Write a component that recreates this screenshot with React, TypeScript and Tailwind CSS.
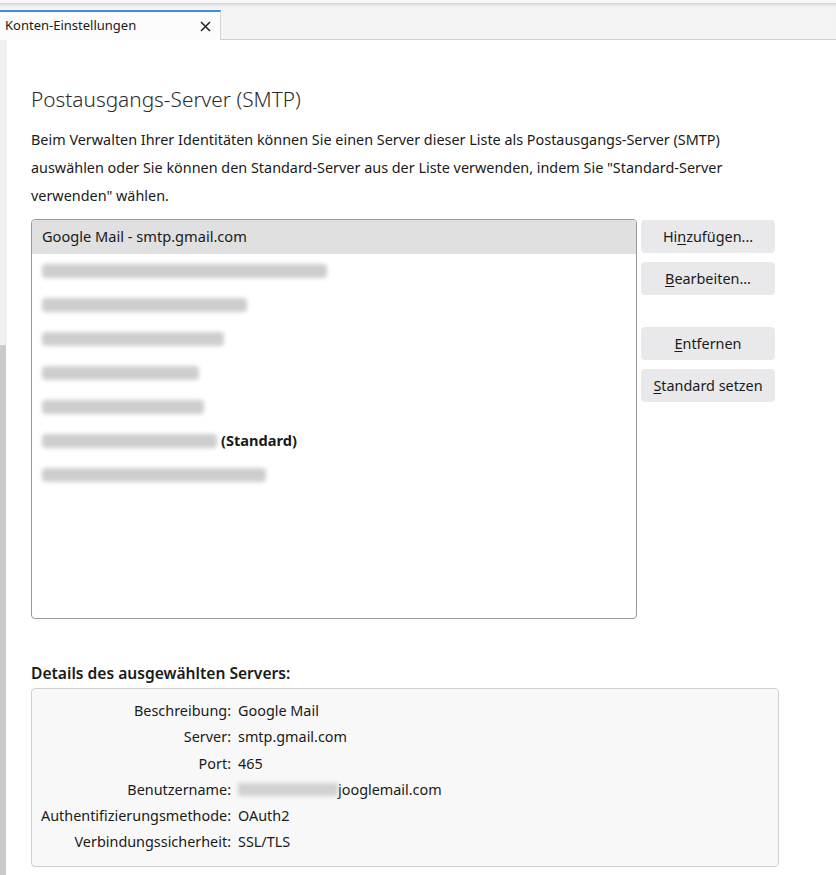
const font = { fontFamily: '"Noto Sans", "Open Sans", sans-serif' };

function Blur({ w }: { w: number }) {
  return (
    <span
      className="inline-block h-[14px] rounded-sm bg-[#bdbdbd] blur-[2px] opacity-75 align-middle"
      style={{ width: w }}
    />
  );
}

function Btn({ pre, u, post }: { pre: string; u: string; post: string }) {
  return (
    <button className="h-[33px] w-[134px] shrink-0 rounded-[4px] bg-[#e9e9eb] text-[14.4px] text-[#1a1a1a]">
      {pre}
      <span className="underline underline-offset-2">{u}</span>
      {post}
    </button>
  );
}

const rows = [325, 245, 222, 197, 202, 215, 264];

const details: [string, React.ReactNode][] = [
  ["Beschreibung:", "Google Mail"],
  ["Server:", "smtp.gmail.com"],
  ["Port:", "465"],
  [
    "Benutzername:",
    <span className="flex items-center">
      <span className="inline-block h-[13px] w-[100px] bg-[#c4c4c4] blur-[2px] opacity-75" />
      <span>jooglemail.com</span>
    </span>,
  ],
  ["Authentifizierungsmethode:", "OAuth2"],
  ["Verbindungssicherheit:", "SSL/TLS"],
];

export default function App() {
  return (
    <div className="w-[836px] h-[875px] overflow-hidden bg-white text-[#1a1a1a]" style={font}>
      {/* tab strip */}
      <div className="h-[4px] bg-[#f7f7f7] border-b border-[#d4d4d4]" />
      <div className="flex h-[36px] bg-[#f4f4f4] border-b border-[#cfcfcf] shadow-[inset_0_3px_3px_-2px_rgba(0,0,0,0.12)]">
        <div className="mt-[6px] -mb-px flex w-[221px] items-center justify-between border-t-2 border-r border-t-[#3b8fe3] border-r-[#d6d6d6] bg-[#fcfcfc] pl-[5px] pr-[9px]">
          <span className="text-[13px] text-[#1a1a1a]">Konten-Einstellungen</span>
          <svg width="11" height="11" viewBox="0 0 11 11" className="text-[#222]">
            <path d="M1 1 L10 10 M10 1 L1 10" stroke="currentColor" strokeWidth="1.5" />
          </svg>
        </div>
      </div>

      <div className="flex h-[835px]">
        {/* left scroll strip */}
        <div className="flex w-[7px] flex-col">
          <div className="h-[305px] bg-[#f0f0f0]" />
          <div className="flex-1 bg-[#cacaca] mr-px" />
        </div>

        <div className="flex-1 pl-[24px]">
          <h1 className="mt-[44px] text-[20.8px] font-light leading-[30px] text-[#2b2b2b]">
            Postausgangs-Server (SMTP)
          </h1>
          <p className="mt-[12px] w-[740px] text-[14.4px] leading-[28px]">
            Beim Verwalten Ihrer Identitäten können Sie einen Server dieser Liste als Postausgangs-Server (SMTP)
            <br />
            auswählen oder Sie können den Standard-Server aus der Liste verwenden, indem Sie "Standard-Server
            <br />
            verwenden" wählen.
          </p>

          <div className="mt-[9px] flex gap-[4px]">
            <div className="h-[400px] w-[606px] rounded-[4px] border border-[#9a9a9a] overflow-hidden">
              <div className="flex h-[34px] items-center bg-[#e0e0e0] px-[10px] text-[14.6px]">
                Google Mail - smtp.gmail.com
              </div>
              {rows.map((w, i) => (
                <div key={i} className="flex h-[34px] items-center px-[10px] text-[14.6px]">
                  <Blur w={w - 40} />
                  {i === 5 && <span className="ml-[4px] font-bold">(Standard)</span>}
                </div>
              ))}
            </div>
            <div className="flex flex-col pt-[1px]">
              <Btn pre="Hi" u="n" post="zufügen..." />
              <div className="mt-[9px]">
                <Btn pre="" u="B" post="earbeiten..." />
              </div>
              <div className="mt-[32px]">
                <Btn pre="" u="E" post="ntfernen" />
              </div>
              <div className="mt-[9px]">
                <Btn pre="" u="S" post="tandard setzen" />
              </div>
            </div>
          </div>

          <h2 className="mt-[43px] text-[15.6px] font-semibold leading-[22px]">Details des ausgewählten Servers:</h2>
          <div className="mt-[4px] w-[748px] rounded-[4px] border border-[#cfcfcf] bg-[#f8f8f8] pt-[9px] pb-[11px] text-[14.4px]">
            {details.map(([k, v]) => (
              <div key={k} className="flex h-[26.2px] items-center">
                <span className="w-[199px] text-right">{k}</span>
                <span className="ml-[7px]">{v}</span>
              </div>
            ))}
          </div>
        </div>
      </div>
    </div>
  );
}
